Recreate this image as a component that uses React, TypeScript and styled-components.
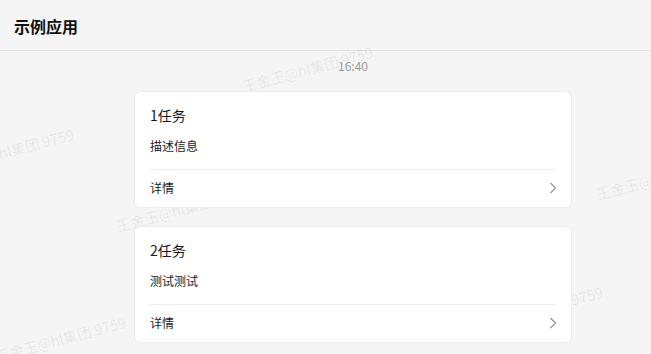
import styled, { createGlobalStyle } from 'styled-components';

interface Task {
    id: number;
    title: string;
    desc: string;
}

const tasks: Task[] = [
    { id: 1, title: '1任务', desc: '描述信息' },
    { id: 2, title: '2任务', desc: '测试测试' },
];

// where each tile of the watermark starts (left, top of the text box)
const marks = [
    { x: 245, y: 76 },
    { x: -54, y: 158 },
    { x: 599, y: 184 },
    { x: 119, y: 216 },
    { x: 475, y: 316 },
    { x: -2, y: 346 },
];

const App = () => {
    return (
        <Page>
            <GlobalStyle />
            <Header>
                <Title>示例应用</Title>
            </Header>
            <Body>
                <Watermarks>
                    {marks.map((m, i) => (
                        <Mark key={i} style={{ left: m.x, top: m.y }}>王金玉@hl集团 9759</Mark>
                    ))}
                </Watermarks>
                <Column>
                    <Time>16:40</Time>
                    {tasks.map(task => (
                        <Card key={task.id}>
                            <CardTitle>{task.title}</CardTitle>
                            <CardDesc>{task.desc}</CardDesc>
                            <Footer>
                                <span>详情</span>
                                <Chevron viewBox="0 0 8 12" width="8" height="12">
                                    <path d="M1.5 1 L6.5 6 L1.5 11" fill="none" stroke="#8a8f99" strokeWidth="1.1" />
                                </Chevron>
                            </Footer>
                        </Card>
                    ))}
                </Column>
            </Body>
        </Page>
    );
};

const GlobalStyle = createGlobalStyle`
    html, body {
        margin: 0;
        padding: 0;
        background: #f5f5f5;
        font-family: "Noto Sans CJK SC", "Noto Sans", sans-serif;
        color: #1f1f1f;
    }
`;

const Page = styled.div`
    height: 354px;
    overflow: hidden;
`;

const Header = styled.div`
    height: 51px;
    display: flex;
    align-items: center;
    padding-left: 14px;
    border-bottom: 1px solid #e3e3e3;
    box-sizing: border-box;
    padding-top: 2px;
`;

const Title = styled.h1`
    margin: 0;
    font-size: 16px;
    font-weight: 700;
    color: #111;
`;

const Body = styled.div`
    position: relative;
`;

const Watermarks = styled.div`
    position: absolute;
    inset: -51px 0 0 0;
    pointer-events: none;
    overflow: hidden;
    height: 354px;
`;

const Mark = styled.span`
    position: absolute;
    white-space: nowrap;
    font-size: 14.5px;
    line-height: 20px;
    color: rgba(0, 0, 0, 0.075);
    transform: rotate(-15deg);
    transform-origin: left bottom;
`;

const Column = styled.div`
    position: relative;
    width: 438px;
    margin-left: 134px;
    display: flex;
    flex-direction: column;
    gap: 18px;
`;

const Time = styled.div`
    text-align: center;
    font-size: 12px;
    line-height: 20px;
    color: #9a9a9a;
    margin: 5px 0 -3px;
`;

const Card = styled.div`
    background: #fff;
    border: 1px solid #ececec;
    border-radius: 6px;
    padding: 13px 15px 0;
`;

const CardTitle = styled.div`
    font-size: 14px;
    line-height: 20px;
    color: #1a1a1a;
`;

const CardDesc = styled.div`
    font-size: 12px;
    line-height: 18px;
    margin-top: 12px;
    padding-bottom: 14px;
    border-bottom: 1px solid #ececec;
    color: #1a1a1a;
`;

const Footer = styled.div`
    height: 37px;
    display: flex;
    align-items: center;
    justify-content: space-between;
    font-size: 12px;
    color: #1a1a1a;
    padding-bottom: 2px;
    box-sizing: border-box;
`;

const Chevron = styled.svg`
    display: block;
    margin-right: -1px;
`;

export default App;
